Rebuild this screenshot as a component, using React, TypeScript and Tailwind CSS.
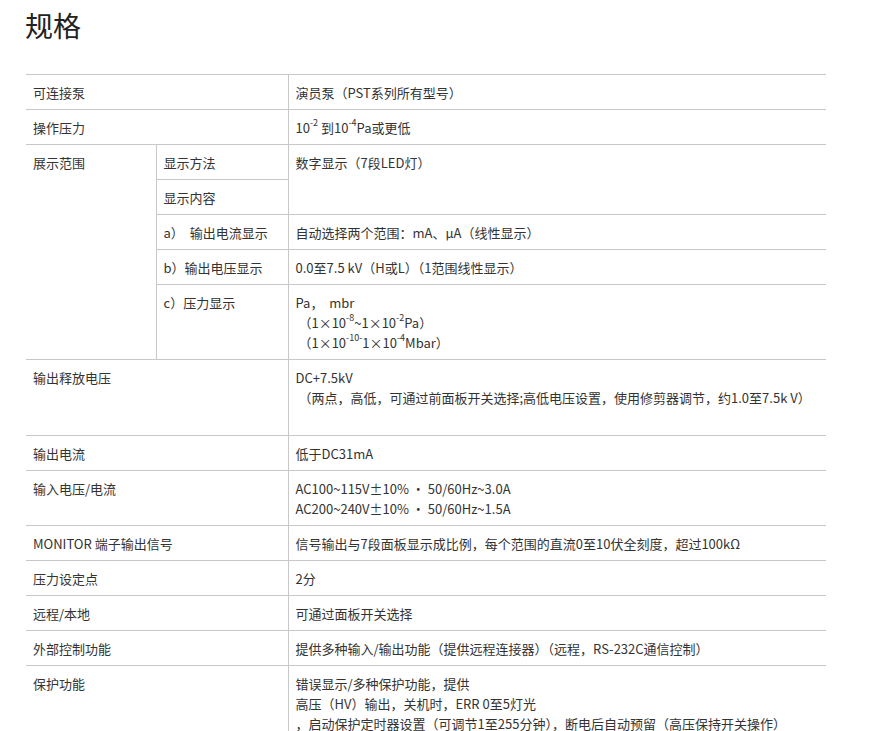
import React from "react";

const S = ({ c }: { c: string }) => (
  <sup className="text-[9px] relative -top-[2px] align-super leading-none">{c}</sup>
);

const td = "border-t border-[#c8c8c8] align-top px-[7px] pt-[8px] pb-[6px]";
const tdl = td + " border-l";

export default function App() {
  return (
    <div
      className="bg-white w-[873px] h-[731px] overflow-hidden text-[#333] text-[13px] leading-[20px]"
      style={{ fontFamily: '"Noto Sans CJK SC", "Noto Sans", sans-serif' }}
    >
      <h1 className="text-[28px] leading-[40px] pl-[25px] pt-[5px] text-[#222]">规格</h1>
      <table className="ml-[26px] mt-[29px] w-[800px] border-collapse table-fixed">
        <colgroup>
          <col className="w-[130px]" />
          <col className="w-[132px]" />
          <col className="w-[538px]" />
        </colgroup>
        <tbody>
          <tr className="h-[34px]">
            <td className={td} colSpan={2}>可连接泵</td>
            <td className={tdl}>演员泵（PST系列所有型号）</td>
          </tr>
          <tr className="h-[35px]">
            <td className={td} colSpan={2}>操作压力</td>
            <td className={tdl}>10<S c="-2" /> 到10<S c="-4" />Pa或更低</td>
          </tr>
          <tr className="h-[35px]">
            <td className={td} rowSpan={6}>展示范围</td>
            <td className={tdl}>显示方法</td>
            <td className={tdl} rowSpan={2}>数字显示（7段LED灯）</td>
          </tr>
          <tr className="h-[33px]">
            <td className={tdl}>显示内容</td>
          </tr>
          <tr className="h-[35px]">
            <td className={tdl}>a）&nbsp; 输出电流显示</td>
            <td className={tdl}>自动选择两个范围：mA、μA（线性显示）</td>
          </tr>
          <tr className="h-[35px]">
            <td className={tdl}>b）输出电压显示</td>
            <td className={tdl}>0.0至7.5 kV（H或L）（1范围线性显示）</td>
          </tr>
          <tr className="h-[72px]">
            <td className={tdl}>c）压力显示</td>
            <td className={tdl}>
              <div>Pa，&nbsp; mbr</div>
              <div>&nbsp;（1×10<S c="-8" />~1×10<S c="-2" />Pa）</div>
              <div>&nbsp;（1×10<S c="-10-" />1×10<S c="-4" />Mbar）</div>
            </td>
          </tr>
          <tr className="h-[0px]"></tr>
          <tr className="h-[76px]">
            <td className={td} colSpan={2}>输出释放电压</td>
            <td className={tdl}>
              DC+7.5kV<br />
              &nbsp;（两点，高低，可通过前面板开关选择;高低电压设置，使用修剪器调节，约1.0至7.5k V）
            </td>
          </tr>
          <tr className="h-[34px]">
            <td className={td} colSpan={2}>输出电流</td>
            <td className={tdl}>低于DC31mA</td>
          </tr>
          <tr className="h-[54px]">
            <td className={td} colSpan={2}>输入电压/电流</td>
            <td className={tdl}>
              AC100~115V±10% · 50/60Hz~3.0A<br />AC200~240V±10% · 50/60Hz~1.5A
            </td>
          </tr>
          <tr className="h-[34px]">
            <td className={td} colSpan={2}>MONITOR 端子输出信号</td>
            <td className={tdl}>信号输出与7段面板显示成比例，每个范围的直流0至10伏全刻度，超过100kΩ</td>
          </tr>
          <tr className="h-[34px]">
            <td className={td} colSpan={2}>压力设定点</td>
            <td className={tdl}>2分</td>
          </tr>
          <tr className="h-[34px]">
            <td className={td} colSpan={2}>远程/本地</td>
            <td className={tdl}>可通过面板开关选择</td>
          </tr>
          <tr className="h-[34px]">
            <td className={td} colSpan={2}>外部控制功能</td>
            <td className={tdl}>提供多种输入/输出功能（提供远程连接器）（远程，RS-232C通信控制）</td>
          </tr>
          <tr className="h-[75px]">
            <td className={td + " border-b"} colSpan={2}>保护功能</td>
            <td className={tdl + " border-b"}>
              错误显示/多种保护功能，提供<br />高压（HV）输出，关机时，ERR 0至5灯光<br />，启动保护定时器设置（可调节1至255分钟），断电后自动预留（高压保持开关操作）
            </td>
          </tr>
        </tbody>
      </table>
    </div>
  );
}
